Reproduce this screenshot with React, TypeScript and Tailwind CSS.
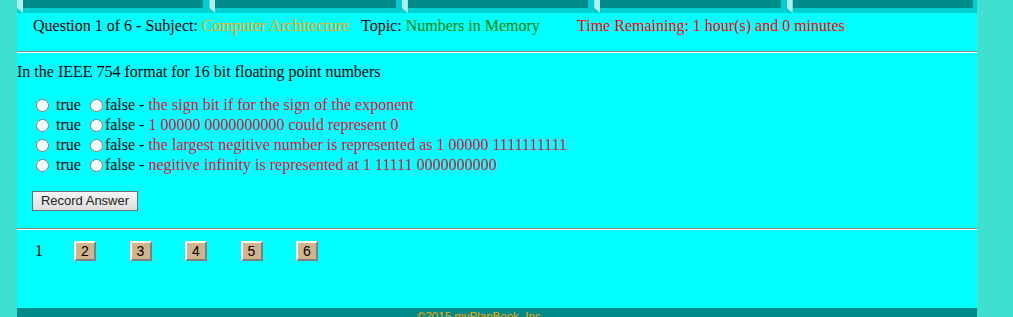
import React from "react";

const options = [
  "the sign bit if for the sign of the exponent",
  "1 00000 0000000000 could represent 0",
  "the largest negitive number is represented as 1 00000 1111111111",
  "negitive infinity is represented at 1 11111 0000000000",
];

function Tab({ last }: { last?: boolean }) {
  return (
    <div className={`flex flex-1 h-[13px] ${last ? "mr-[4px]" : "mr-[6px]"}`}>
      <div className="w-[6px] h-[13px] bg-[#AFEEEE] [clip-path:polygon(0_0,100%_0,100%_100%,0_62%)]" />
      <div className="flex-1 h-[8px] bg-[#008B8B]" />
    </div>
  );
}

function Hr() {
  return (
    <div className="w-full border-t border-t-[#8a8a8a] border-b border-b-white" />
  );
}

export default function App() {
  return (
    <div className="min-h-[340px] w-full bg-[#40E0D0] font-['Liberation_Serif',serif] text-[16px] leading-[18px] text-black">
      <div className="ml-[17px] w-[960px] bg-[#00FFFF]">
        {/* tab band */}
        <div className="flex bg-[#00CED1] h-[13px]">
          <Tab />
          <Tab />
          <Tab />
          <Tab />
          <Tab last />
        </div>

        {/* header */}
        <div className="flex pl-[16px] pt-[4px] h-[38px]">
          <div className="w-[328px] whitespace-nowrap">
            Question 1 of 6 - Subject: <span className="text-[#FFA500]">Computer Architecture</span>
          </div>
          <div className="w-[216px] whitespace-nowrap">
            Topic: <span className="text-[#008000]">Numbers in Memory</span>
          </div>
          <div className="whitespace-nowrap text-[#FF0000]">
            Time Remaining: 1 hour(s) and 0 minutes
          </div>
        </div>
        <Hr />

        {/* question */}
        <div className="pt-[10px]">In the IEEE 754 format for 16 bit floating point numbers</div>

        <div className="pt-[14px] pl-[19px] flex flex-col">
          {options.map((o, i) => (
            <div key={i} className="flex items-center h-[20px] whitespace-nowrap">
              <input type="radio" name={`q${i}`} className="m-0 w-[13px] h-[13px]" />
              <span className="ml-[7px]">true</span>
              <input type="radio" name={`q${i}`} className="m-0 ml-[9px] w-[13px] h-[13px]" />
              <span className="ml-[2px]">
                false - <span className="text-[#E0103C]">{o}</span>
              </span>
            </div>
          ))}
        </div>

        <div className="pt-[16px] pl-[15px] pb-[17px]">
          <button className="h-[20px] w-[106px] border border-[#707070] bg-gradient-to-b from-[#f4f4f4] to-[#dedede] font-['Liberation_Sans',sans-serif] text-[13px] leading-[16px] text-[#222]">
            Record Answer
          </button>
        </div>
        <Hr />

        {/* pagination */}
        <div className="flex pt-[11px] pl-[18px] h-[78px] items-start">
          <span className="w-[39px] h-[20px] flex items-center">1</span>
          {[2, 3, 4, 5, 6].map((n) => (
            <button
              key={n}
              className="w-[22px] h-[20px] mr-[33.5px] bg-[#D2B48C] border-2 border-t-white border-l-white border-r-[#808080] border-b-[#808080] font-['Liberation_Sans',sans-serif] text-[14px] leading-[16px] text-black flex items-center justify-center"
            >
              {n}
            </button>
          ))}
        </div>

        {/* footer */}
        <div className="bg-[#008B8B] h-[30px] pt-[1px] pl-[400px] font-['Liberation_Sans',sans-serif] text-[11.5px] leading-[14px] text-[#FFA500]">
          ©2015 myPlanBook, Inc.
        </div>
      </div>
    </div>
  );
}
